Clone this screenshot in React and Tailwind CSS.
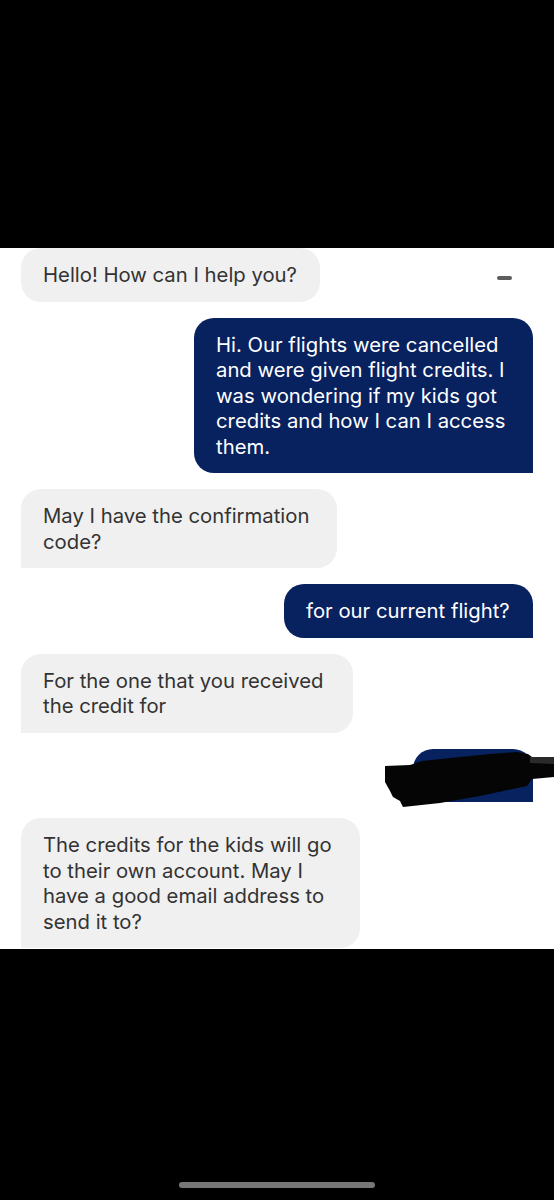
import React from "react";

const font = { fontFamily: "Inter, 'Liberation Sans', Arial, sans-serif" };

function Gray({ w, lines, full }) {
  return (
    <div
      className={`${w} shrink-0 bg-[#f0f0f0] text-[#333333] text-[20.3px] leading-[25.5px] pl-[22px] py-[14px] whitespace-nowrap ${
        full ? "rounded-[20px]" : "rounded-tl-[20px] rounded-tr-[20px] rounded-br-[20px]"
      }`}
    >
      {lines.map((l, i) => (
        <div key={i}>{l}</div>
      ))}
    </div>
  );
}

function Navy({ w, lines }) {
  return (
    <div className="flex justify-end pr-[21px]">
      <div
        className={`${w} bg-[#08215f] text-white text-[20.3px] leading-[25.5px] pl-[22px] py-[14px] whitespace-nowrap rounded-tl-[20px] rounded-tr-[20px] rounded-bl-[20px]`}
      >
        {lines.map((l, i) => (
          <div key={i}>{l}</div>
        ))}
      </div>
    </div>
  );
}

export default function App() {
  return (
    <div className="w-[554px] h-[1200px] bg-black flex flex-col" style={font}>
      <div className="h-[248px] shrink-0" />
      <div className="h-[701px] shrink-0 bg-white overflow-hidden flex flex-col gap-[16px]">
        <div className="flex items-center justify-between pl-[21px] pr-[42px]">
          <Gray w="w-[299px]" full lines={["Hello! How can I help you?"]} />
          <div className="w-[15px] h-[4px] rounded-full bg-[#5e5e5e] mt-[6px]" />
        </div>
        <Navy
          w="w-[339px]"
          lines={[
            "Hi. Our flights were cancelled",
            "and were given flight credits. I",
            "was wondering if my kids got",
            "credits and how I can I access",
            "them.",
          ]}
        />
        <div className="flex pl-[21px]">
          <Gray w="w-[316px]" lines={["May I have the confirmation", "code?"]} />
        </div>
        <Navy w="w-[249px]" lines={["for our current flight?"]} />
        <div className="flex pl-[21px]">
          <Gray w="w-[332px]" lines={["For the one that you received", "the credit for"]} />
        </div>
        <div className="relative flex justify-end pr-[21px]">
          <div className="w-[120px] h-[53.5px] bg-[#08215f] rounded-tl-[20px] rounded-tr-[20px] rounded-bl-[20px]" />
          <svg
            className="absolute left-[380px] top-[-3px]"
            width="174"
            height="64"
            viewBox="0 0 174 64"
          >
            <polygon
              points="5,20 30,19 42,15 80,11 110,8 137,6 148,8 152,11 174,11 174,31 152,33 147,40 100,50 60,57 23,61 20,55 13,51 10,45 5,36"
              fill="#050505"
            />
            <polygon points="150,11 174,11 174,18 150,17" fill="#2a2a2a" />
          </svg>
        </div>
        <div className="flex pl-[21px]">
          <Gray
            w="w-[339px]"
            lines={[
              "The credits for the kids will go",
              "to their own account. May I",
              "have a good email address to",
              "send it to?",
            ]}
          />
        </div>
      </div>
      <div className="flex-1 flex flex-col justify-end items-center pb-[12px]">
        <div className="w-[196px] h-[6px] rounded-full bg-[#777777]" />
      </div>
    </div>
  );
}
